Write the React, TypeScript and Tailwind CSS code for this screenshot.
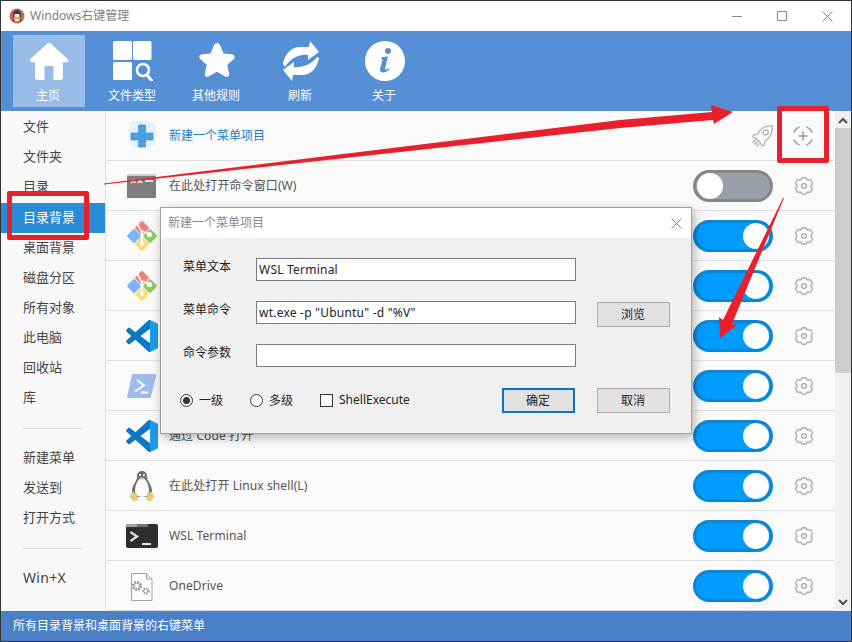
const FONT = "font-['Noto_Sans','Noto_Sans_CJK_SC',sans-serif]";

function Gear() {
  return (
    <svg width="20" height="20" viewBox="0 0 22 22" fill="none" stroke="#aaaaaa" strokeWidth="1.500" strokeLinejoin="round">
      <path d="M8.4 2.600c.6-.9 4.600-.9 5.200 0 .4.700.5 1.700 1.600 1.900 1-.2 1.800-.8 2.600-.4.800.5 2.800 3.800 2.300 4.700-.4.700-1.400 1.200-1.400 2.200s1 1.500 1.400 2.200c.5.900-1.500 4.200-2.300 4.700-.8.400-1.600-.2-2.600-.4-1.100.2-1.200 1.200-1.600 1.900-.6.900-4.600.900-5.200 0-.4-.7-.5-1.700-1.600-1.900-1 .2-1.800.8-2.600.4-.8-.5-2.800-3.800-2.300-4.700.4-.7 1.400-1.200 1.400-2.200s-1-1.500-1.400-2.200c-.5-.9 1.500-4.200 2.300-4.700.8-.4 1.600.2 2.600.4 1.100-.2 1.200-1.200 1.600-1.900z" />
      <circle cx="11" cy="11" r="2.600" />
    </svg>
  );
}

function Toggle({ on }: { on: boolean }) {
  return (
    <div
      className={
        on
          ? "flex h-8 w-20 items-center justify-end rounded-full border-[3px] border-[#0a86d4] bg-[#009cff] pr-px"
          : "flex h-8 w-20 items-center justify-start rounded-full border-[3px] border-[#82878e] bg-[#9aa0a8] pl-px"
      }
    >
      <div className="h-[26px] w-[26px] rounded-full bg-white" />
    </div>
  );
}

function CmdIcon() {
  return (
    <svg width="32" height="32" viewBox="0 0 32 32">
      <rect x="1" y="4" width="29" height="24" fill="#7d7d7d" />
      <rect x="1" y="4" width="29" height="2" fill="#cfcfcf" />
      <path d="M5 13l3-3M8 10l1 3M12 13l2-3 2 3M19 11h8" stroke="#fff" strokeWidth="1.500" fill="none" />
    </svg>
  );
}

function GitIcon() {
  return (
    <svg width="32" height="32" viewBox="0 0 32 32">
      <rect x="10.700" y="2.700" width="10.600" height="10.600" rx="1.500" transform="rotate(45 16 8)" fill="#f0807e" />
      <rect x="18.700" y="10.700" width="10.600" height="10.600" rx="1.500" transform="rotate(45 24 16)" fill="#8ccb62" />
      <rect x="10.700" y="18.700" width="10.600" height="10.600" rx="1.500" transform="rotate(45 16 24)" fill="#fbdc7c" />
      <rect x="2.700" y="10.700" width="10.600" height="10.600" rx="1.500" transform="rotate(45 8 16)" fill="#7db3f7" />
      <path d="M11 3l5 10v11M16 11l7 3" stroke="#fff" strokeWidth="1.600" fill="none" />
      <circle cx="16" cy="15" r="1.800" fill="#fff" />
      <circle cx="23.500" cy="14.500" r="2.600" fill="#fff" />
      <circle cx="16" cy="24" r="2" fill="#fff" />
    </svg>
  );
}

function CodeIcon() {
  return (
    <svg width="32" height="32" viewBox="0 0 100 100">
      <path
        d="M96.500 10.800L75.900.9c-2.400-1.200-5.300-.7-7.200 1.200L29.400 38 12.300 25c-1.600-1.200-3.800-1.100-5.300.2L1.500 30.300c-1.800 1.600-1.800 4.400 0 6L16.300 50 1.500 63.700c-1.800 1.600-1.800 4.400 0 6l5.500 5c1.500 1.300 3.700 1.400 5.300.2L29.400 62l39.300 35.900c1.900 1.900 4.800 2.400 7.200 1.200l20.600-9.900c2.200-1 3.500-3.100 3.500-5.500V16.300c0-2.400-1.400-4.500-3.500-5.500zM75 72.700L45.200 50 75 27.300z"
        fill="#0a78c4"
      />
      <path d="M75 .5l21.500 10.300c2.100 1 3.500 3.100 3.500 5.500v67.400c0 2.400-1.300 4.500-3.500 5.500L75 99.500z" fill="#1c9ce8" />
    </svg>
  );
}

function PowerShellIcon() {
  return (
    <svg width="32" height="32" viewBox="0 0 32 32">
      <path d="M7 4h22c1 0 1.500.6 1.300 1.500L25 26.500c-.2 1-1 1.500-2 1.500H2.500c-1 0-1.500-.6-1.300-1.500L6 5c.1-.6.400-1 1-1z" fill="#9dbcea" />
      <path d="M11 10l7 5.500-9 6" stroke="#fff" strokeWidth="2" fill="none" />
      <path d="M15 22.500h7" stroke="#fff" strokeWidth="2" />
    </svg>
  );
}

function LinuxIcon() {
  return (
    <svg width="32" height="32" viewBox="0 0 32 32">
      <path d="M16 1c-3.500 0-5 2.500-5 6 0 4-5 8-5 14 0 3 2 5 4 6h12c2-1 4-3 4-6 0-6-5-10-5-14 0-3.500-1.500-6-5-6z" fill="#6f6f6f" />
      <path d="M16 8c-3.500 0-7 6.500-7 13 0 3 2.500 6 7 6s7-3 7-6c0-6.500-3.500-13-7-13z" fill="#fbfbfb" />
      <path d="M13.500 7.500h5L16 10z" fill="#e0b55c" />
      <circle cx="14" cy="5" r="1" fill="#fff" />
      <circle cx="18" cy="5" r="1" fill="#fff" />
      <path d="M3.500 26.500l3.500-5 3 2.500 2.500 5.500-5 2zM28.500 26.500l-3.500-5-3 2.500-2.500 5.500 5 2z" fill="#edc679" />
    </svg>
  );
}

function TerminalIcon() {
  return (
    <svg width="32" height="32" viewBox="0 0 32 32">
      <rect y="4" width="32" height="24" rx="2" fill="#2e2e2e" />
      <path d="M2 4h9v3H0V6a2 2 0 012-2z" fill="#a3a3a3" />
      <rect x="11" y="4" width="11" height="3" fill="#737373" />
      <path d="M4.500 12l6.500 4.500-6.500 4.500" stroke="#dddddd" strokeWidth="2.400" fill="none" />
      <path d="M16 24h9" stroke="#e6e6e6" strokeWidth="2" />
    </svg>
  );
}

function FileIcon() {
  return (
    <svg width="32" height="32" viewBox="0 0 32 32">
      <path d="M5.500 3.500h15l5.500 5.500v21.500h-20.500z" fill="#fff" stroke="#a3a3a3" />
      <path d="M20.500 3.500v5.500h5.500" fill="#efefef" stroke="#a3a3a3" />
      <circle cx="11" cy="16" r="3.600" fill="none" stroke="#929292" strokeWidth="2.800" strokeDasharray="1.800 1" />
      <circle cx="20" cy="21" r="2.500" fill="none" stroke="#929292" strokeWidth="2.200" strokeDasharray="1.500 .8" />
    </svg>
  );
}

function PlusIcon() {
  return (
    <svg width="32" height="32" viewBox="0 0 32 32">
      <path d="M6 2c8-2 18-2 23 2 2 7 2 15-1 22-6 3-16 3-22 1C1 20 1 8 6 2z" fill="#e6f2fb" />
      <path d="M12.500 5h7v8h7.500v7h-7.500v7h-7v-7H5v-7h7.500z" fill="#4a9fe0" stroke="#3a8ccc" strokeWidth=".6" strokeLinejoin="round" />
    </svg>
  );
}

function RocketIcon() {
  return (
    <svg width="22" height="22" viewBox="0 0 24 24" fill="none" stroke="#b0b0b0" strokeWidth="1.400" strokeLinejoin="round" strokeLinecap="round">
      <path d="M23 1C16 0 10 4 7 10c-3 0-5 1-5 3l4 2 4 4 2 4c2 0 3-3 3-5 6-4 9-10 8-17z" />
      <circle cx="16" cy="8" r="2.800" />
      <path d="M2 19l3-3M4 21l3-3M6 23l3-3" />
    </svg>
  );
}

function AddCircle() {
  return (
    <svg width="22" height="22" viewBox="0 0 22 22" fill="none" stroke="#9b9b9b" strokeWidth="1.500" strokeLinecap="round">
      <path d="M7 2.100A9.500 9.500 0 002.100 7M15 2.100A9.500 9.500 0 0119.900 7M2.100 15A9.500 9.500 0 007 19.900M15 19.900A9.500 9.500 0 0019.900 15" />
      <path d="M11 7v8M7 11h8" />
    </svg>
  );
}

function HomeIcon() {
  return (
    <svg width="40" height="40" viewBox="0 0 40 40" fill="#fff">
      <path d="M20 2c1 0 1.800.4 2.600 1.200L38.600 18c1.300 1.300.6 3.200-1.200 3.200H34V36c0 2-1 3-3 3h-6.500V25h-9v14H9c-2 0-3-1-3-3V21.200H2.600C.8 21.200.1 19.300 1.400 18L17.400 3.200C18.200 2.400 19 2 20 2z" />
    </svg>
  );
}

function TypesIcon() {
  return (
    <svg width="40" height="40" viewBox="0 0 40 40" fill="#fff">
      <rect x="0" y="0" width="19" height="19" rx="1.500" />
      <rect x="20" y="0" width="18.500" height="19" rx="1.500" />
      <rect x="0" y="21" width="19" height="18" rx="1.500" />
      <circle cx="30" cy="29" r="6" fill="none" stroke="#fff" strokeWidth="2.600" />
      <path d="M34 34l5 6" stroke="#fff" strokeWidth="3" strokeLinecap="round" />
    </svg>
  );
}

function StarIcon() {
  return (
    <svg width="40" height="40" viewBox="0 0 40 40" fill="#fff">
      <path d="M20 2c1.500 0 2.500 1 3.200 2.500l3.300 8 8.300.8c3 .3 3.800 3 1.700 5l-6.300 5.600 1.900 8.400c.7 3-1.600 4.600-4.200 3L20 30.800l-7.900 4.500c-2.600 1.600-4.900 0-4.200-3l1.900-8.400-6.300-5.600c-2.100-2-1.300-4.700 1.700-5l8.300-.8 3.300-8C17.500 3 18.500 2 20 2z" />
    </svg>
  );
}

function RefreshIcon() {
  return (
    <svg width="40" height="40" viewBox="0 0 40 40" fill="#fff">
      <path d="M2 23C4 12 11 6 19 6h9l1-6 9 11-11 8v-5C20 13 10 16 4 26z" />
      <path d="M38 17c-2 11-9 17-17 17h-9l-1 6-9-11 11-8v5c7 1 17-2 23-10z" />
    </svg>
  );
}

function InfoIcon() {
  return (
    <svg width="40" height="40" viewBox="0 0 40 40">
      <circle cx="20" cy="20" r="20" fill="#fff" />
      <circle cx="23" cy="10" r="3" fill="#5590d6" />
      <path d="M16 17c2-1 4-1.500 7-1.500l-3 12c-.2 1 .5 1.300 1.500 1 .7-.2 1.500-.7 2.500-1.500l.5 1c-2 2-4 3.500-6.500 3.500-2.500 0-3.500-1.500-3-3.500l2.500-9c.2-1-.5-1.200-1.500-1z" fill="#5590d6" />
    </svg>
  );
}

function Penguin() {
  return (
    <svg width="16" height="16" viewBox="0 0 16 16">
      <circle cx="8" cy="8" r="7.500" fill="#c9655a" />
      <path d="M8 2C5.500 2 4 4 4 7v6h8V7c0-3-1.500-5-4-5z" fill="#3a3a3a" />
      <path d="M5.500 6h5v7h-5z" fill="#f3ece0" />
      <path d="M4.500 9h7v2h-7z" fill="#e2a13c" />
    </svg>
  );
}

const toolbar = [
  { label: "主页", icon: <HomeIcon />, active: true },
  { label: "文件类型", icon: <TypesIcon />, active: false },
  { label: "其他规则", icon: <StarIcon />, active: false },
  { label: "刷新", icon: <RefreshIcon />, active: false },
  { label: "关于", icon: <InfoIcon />, active: false },
];

const sideGroups = [
  ["文件", "文件夹", "目录", "目录背景", "桌面背景", "磁盘分区", "所有对象", "此电脑", "回收站", "库"],
  ["新建菜单", "发送到", "打开方式"],
  ["Win+X"],
];

const rows = [
  { label: "在此处打开命令窗口(W)", icon: <CmdIcon />, on: false },
  { label: "", icon: <GitIcon />, on: true },
  { label: "", icon: <GitIcon />, on: true },
  { label: "", icon: <CodeIcon />, on: true },
  { label: "", icon: <PowerShellIcon />, on: true },
  { label: "通过 Code 打开", icon: <CodeIcon />, on: true },
  { label: "在此处打开 Linux shell(L)", icon: <LinuxIcon />, on: true },
  { label: "WSL Terminal", icon: <TerminalIcon />, on: true },
  { label: "OneDrive", icon: <FileIcon />, on: true },
];

function DialogButton({ children, primary }: { children: string; primary?: boolean }) {
  return (
    <div
      className={
        primary
          ? "flex h-[25px] w-[73px] items-center justify-center border-2 border-[#0f74bd] bg-[#e1e1e1] pr-px text-xs text-[#222]"
          : "flex h-[25px] w-[73px] items-center justify-center border border-[#adadad] bg-[#e1e1e1] pr-px text-xs text-[#222]"
      }
    >
      {children}
    </div>
  );
}

function Field({ label, value, button }: { label: string; value: string; button?: boolean }) {
  return (
    <div className="flex h-[23px] items-start">
      <div className="w-[73px] text-xs leading-[17px] text-[#222]">{label}</div>
      <div className="flex h-[23px] w-[320px] items-center border border-[#7a7a7a] bg-white pl-[2px] text-xs tracking-[0.22px] text-[#222]">
        {value}
      </div>
      {button && (
        <div className="ml-[21px] mt-px">
          <DialogButton>浏览</DialogButton>
        </div>
      )}
    </div>
  );
}

export default function App() {
  return (
    <div className={`relative h-[642px] w-[852px] overflow-hidden bg-[#2f3438] p-px ${FONT}`}>
      <div className="flex h-full w-full flex-col bg-white">
        <header className="flex h-[30px] shrink-0 items-center pl-2 pr-[18px]">
          <Penguin />
          <span className="ml-[5px] text-xs text-[#808080]">Windows右键管理</span>
          <div className="ml-auto flex items-center gap-[35px]">
            <svg width="10" height="10" viewBox="0 0 10 10" stroke="#8a8a8a" fill="none"><path d="M0 5.500h10" /></svg>
            <svg width="10" height="10" viewBox="0 0 10 10" stroke="#8a8a8a" fill="none"><rect x=".5" y=".5" width="9" height="9" /></svg>
            <svg width="11" height="11" viewBox="0 0 11 11" stroke="#8a8a8a" fill="none"><path d="M.5.500l10 10M10.500.500l-10 10" /></svg>
          </div>
        </header>

        <nav className="flex h-20 shrink-0 items-center gap-3 bg-[#5590d6] pl-3">
          {toolbar.map((t) => (
            <div
              key={t.label}
              className={
                t.active
                  ? "flex h-[72px] w-[72px] flex-col items-center bg-[#99bbe8] pt-[6px]"
                  : "flex h-[72px] w-[72px] flex-col items-center pt-[6px]"
              }
            >
              {t.icon}
              <span className="-ml-[2px] mt-[7px] text-xs leading-4 text-white">{t.label}</span>
            </div>
          ))}
        </nav>

        <div className="flex min-h-0 flex-1">
          <aside className="w-[105px] shrink-0 border-r border-[#dbe0e6] bg-[#f8f8f8] pt-px">
            {sideGroups.map((group, i) => (
              <div key={i} className={i > 0 ? "mx-[22px] mt-[15px] border-t border-[#dcdcdc] pt-[14px]" : ""}>
                {group.map((s) => (
                  <div
                    key={s}
                    className={
                      s === "目录背景"
                        ? "mt-px flex h-[30px] items-center bg-[#2a8bd6] pl-[22px] text-[13px] text-white"
                        : s === "Win+X"
                          ? "flex h-[30px] items-center text-sm tracking-[0.3px] text-[#444]"
                          : i > 0
                            ? "flex h-[30px] items-center text-[13px] text-[#444]"
                            : "flex h-[30px] items-center pl-[22px] text-[13px] text-[#444]"
                    }
                  >
                    {s}
                  </div>
                ))}
              </div>
            ))}
          </aside>

          <main className="flex min-w-0 flex-1 flex-col bg-[#fafafa]">
            <div className="flex h-[50px] shrink-0 items-center border-b border-[#dfdfdf] pl-5 pr-[21px]">
              <PlusIcon />
              <span className="ml-[11px] text-xs text-[#1b7fc4]">新建一个菜单项目</span>
              <div className="ml-auto"><RocketIcon /></div>
              <div className="ml-[19px]"><AddCircle /></div>
            </div>
            {rows.map((r, i) => (
              <div key={i} className="flex h-[50px] shrink-0 items-center border-b border-[#dfdfdf] pl-5 pr-[21px]">
                {r.icon}
                <span className="ml-[11px] text-xs tracking-[0.1px] text-[#555]">{r.label}</span>
                <div className="ml-auto"><Toggle on={r.on} /></div>
                <div className="ml-[21px]"><Gear /></div>
              </div>
            ))}
          </main>

          <div className="flex w-4 shrink-0 flex-col items-center bg-[#f0f0f0]">
            <svg className="mt-[6px]" width="10" height="7" viewBox="0 0 10 7" fill="none" stroke="#505050" strokeWidth="2"><path d="M1 6l4-4 4 4" /></svg>
            <div className="mt-[4px] h-[245px] w-full bg-[#cdcdcd]" />
            <svg className="mt-auto mb-[5px]" width="10" height="7" viewBox="0 0 10 7" fill="none" stroke="#505050" strokeWidth="2"><path d="M1 1l4 4 4-4" /></svg>
          </div>
        </div>

        <footer className="flex h-[30px] shrink-0 items-center bg-[#4a80c7] pl-3 text-xs text-white">
          所有目录背景和桌面背景的右键菜单
        </footer>
      </div>

      {/* Modal dialog */}
      <div className="absolute left-[160px] top-[207px] flex h-[227px] w-[532px] flex-col border border-[#a0a0a0] bg-[#f0f0f0] shadow-[2px_3px_10px_rgba(0,0,0,0.3)]">
        <div className="flex h-[30px] shrink-0 items-center justify-between bg-white pl-[7px] pr-[9px]">
          <span className="text-xs text-[#8a8a8a]">新建一个菜单项目</span>
          <svg width="11" height="11" viewBox="0 0 11 11" stroke="#8a8a8a" fill="none"><path d="M.5.500l10 10M10.500.500l-10 10" /></svg>
        </div>
        <div className="flex flex-col gap-5 pl-[22px] pt-5">
          <Field label="菜单文本" value="WSL Terminal" />
          <Field label="菜单命令" value={'wt.exe -p "Ubuntu" -d "%V"'} button />
          <Field label="命令参数" value="" />
        </div>
        <div className="mt-[21px] flex h-[25px] items-center pl-[19px] text-xs text-[#222]">
          <div className="flex h-[13px] w-[13px] items-center justify-center rounded-full border border-[#333] bg-white">
            <div className="h-[7px] w-[7px] rounded-full bg-[#333]" />
          </div>
          <span className="ml-[6px]">一级</span>
          <div className="ml-[27px] h-[13px] w-[13px] rounded-full border border-[#333] bg-white" />
          <span className="ml-[6px]">多级</span>
          <div className="ml-[27px] h-[13px] w-[13px] border border-[#333] bg-white" />
          <span className="mb-[2px] ml-[6px]">ShellExecute</span>
          <div className="ml-auto mr-[21px] flex gap-[22px]">
            <DialogButton primary>确定</DialogButton>
            <DialogButton>取消</DialogButton>
          </div>
        </div>
      </div>

      {/* Red annotations drawn on top of the screenshot */}
      <div className="absolute left-[7px] top-[191px] h-[49px] w-[82px] rounded-[2px] border-[5px] border-[#e8202c]" />
      <div className="absolute left-[777px] top-[106px] h-[57px] w-[52px] rounded-[2px] border-[5px] border-[#e8202c]" />
      <svg className="absolute left-0 top-0" width="852" height="642" viewBox="0 0 852 642">
        <polygon points="104,183.500 620,120 712,112 711,105 733,112 714,124 713,120 620,128 104,184.500" fill="#e8202c" />
        <polygon points="784,198 732,324 737,325 720,338 719,317 723,320 783,198" fill="#e8202c" />
      </svg>
    </div>
  );
}
